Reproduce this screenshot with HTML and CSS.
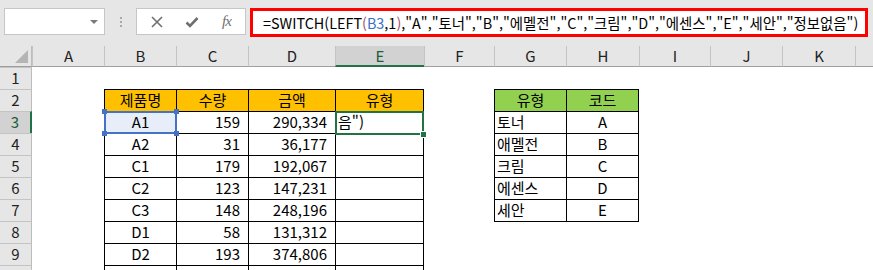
FILE: index.html
```html
<!DOCTYPE html>
<html lang="ko">
<head>
    <meta charset="UTF-8">
    <meta name="viewport" content="width=device-width, initial-scale=1.0">
    <title>SWITCH 함수</title>
    <link rel="stylesheet" href="styles.css">
</head>
<body>
    <!-- formula bar -->
    <div class="toolbar">
        <div class="namebox"><span class="caret"></span></div>
        <div class="grip"><i></i><i></i><i></i></div>
        <div class="fn-buttons">
            <span class="fn-btn">
                <svg width="12" height="12" viewBox="0 0 12 12"><path d="M1 1L11 11M11 1L1 11" stroke="#6f6f6f" stroke-width="1.6" fill="none"/></svg>
            </span>
            <span class="fn-btn">
                <svg width="14" height="12" viewBox="0 0 14 12"><path d="M1.5 6.5L5 10L12.5 2" stroke="#6f6f6f" stroke-width="2.6" fill="none"/></svg>
            </span>
            <span class="fn-btn fx">fx</span>
        </div>
        <div class="formula">=SWITCH(LEFT<span class="paren">(</span><span class="ref">B3</span>,1<span class="paren">)</span>,"A","토너","B","에멜전","C","크림","D","에센스","E","세안","정보없음")</div>
    </div>

    <!-- worksheet -->
    <div class="sheet">
        <div class="corner"></div>
        <div class="ch">A</div><div class="ch">B</div><div class="ch">C</div><div class="ch">D</div>
        <div class="ch on">E</div><div class="ch">F</div><div class="ch">G</div><div class="ch">H</div>
        <div class="ch">I</div><div class="ch">J</div><div class="ch">K</div><div class="ch"></div>

        <div class="rh">1</div>
        <div></div><div></div><div></div><div></div><div></div><div></div><div></div><div></div><div></div><div></div><div></div><div></div>

        <div class="rh">2</div>
        <div></div>
        <div class="t hd-o">제품명</div><div class="t hd-o">수량</div><div class="t hd-o">금액</div><div class="t end hd-o">유형</div>
        <div></div>
        <div class="t hd-g">유형</div><div class="t end hd-g">코드</div>
        <div></div><div></div><div></div><div></div>

        <div class="rh on">3</div>
        <div></div>
        <div class="t ctr sel-ref">A1</div><div class="t num">159</div><div class="t num">290,334</div><div class="t end txt active">음")</div>
        <div></div>
        <div class="t txt">토너</div><div class="t end ctr">A</div>
        <div></div><div></div><div></div><div></div>

        <div class="rh">4</div>
        <div></div>
        <div class="t ctr">A2</div><div class="t num">31</div><div class="t num">36,177</div><div class="t end"></div>
        <div></div>
        <div class="t txt">애멜전</div><div class="t end ctr">B</div>
        <div></div><div></div><div></div><div></div>

        <div class="rh">5</div>
        <div></div>
        <div class="t ctr">C1</div><div class="t num">179</div><div class="t num">192,067</div><div class="t end"></div>
        <div></div>
        <div class="t txt">크림</div><div class="t end ctr">C</div>
        <div></div><div></div><div></div><div></div>

        <div class="rh">6</div>
        <div></div>
        <div class="t ctr">C2</div><div class="t num">123</div><div class="t num">147,231</div><div class="t end"></div>
        <div></div>
        <div class="t txt">에센스</div><div class="t end ctr">D</div>
        <div></div><div></div><div></div><div></div>

        <div class="rh">7</div>
        <div></div>
        <div class="t ctr">C3</div><div class="t num">148</div><div class="t num">248,196</div><div class="t end"></div>
        <div></div>
        <div class="t txt">세안</div><div class="t end ctr">E</div>
        <div></div><div></div><div></div><div></div>

        <div class="rh">8</div>
        <div></div>
        <div class="t ctr">D1</div><div class="t num">58</div><div class="t num">131,312</div><div class="t end"></div>
        <div></div>
        <div class="cap"></div><div class="cap"></div>
        <div></div><div></div><div></div><div></div>

        <div class="rh">9</div>
        <div></div>
        <div class="t ctr">D2</div><div class="t num">193</div><div class="t num">374,806</div><div class="t end"></div>
        <div></div><div></div><div></div><div></div><div></div><div></div><div></div>

        <div class="rh"></div>
        <div></div>
        <div class="t"></div><div class="t"></div><div class="t"></div><div class="t end"></div>
        <div></div><div></div><div></div><div></div><div></div><div></div><div></div>
    </div>
</body>
</html>
```

FILE: styles.css
```css
body {
    margin: 0;
    width: 873px;
    height: 270px;
    overflow: hidden;
    background-color: #e6e6e6;
    font-family: "Noto Sans CJK KR", sans-serif;
    font-size: 15px;
    color: #000;
}

/* formula bar */
.toolbar {
    display: flex;
    align-items: flex-start;
    height: 46px;
    padding-top: 8px;
    box-sizing: border-box;
}
.namebox {
    margin-left: 4px;
    width: 101px;
    height: 27px;
    box-sizing: border-box;
    background-color: #fff;
    border: 1px solid #c6c6c6;
    display: flex;
    align-items: center;
    justify-content: flex-end;
    padding-right: 6px;
}
.caret {
    border-left: 4px solid transparent;
    border-right: 4px solid transparent;
    border-top: 4px solid #7a7a7a;
}
.grip {
    margin-left: 15px;
    margin-top: 9px;
    display: flex;
    flex-direction: column;
    gap: 2px;
}
.grip i {
    width: 2px;
    height: 2px;
    background-color: #a9a9a9;
}
.fn-buttons {
    margin-left: 14px;
    width: 110px;
    height: 27px;
    box-sizing: border-box;
    background-color: #fff;
    border: 1px solid #c6c6c6;
    padding-left: 2px;
    display: grid;
    grid-template-columns: repeat(3, 35px);
    align-items: center;
    justify-items: center;
}
.fn-btn {
    display: flex;
}
.fx {
    font-family: "Liberation Serif", serif;
    font-style: italic;
    font-size: 15px;
    color: #6f6f6f;
    letter-spacing: -1px;
}
.formula {
    margin-left: 4px;
    width: 618px;
    height: 29px;
    box-sizing: border-box;
    background-color: #fff;
    border: 3px solid #ff0000;
    padding-left: 10px;
    font-size: 14.4px;
    line-height: 23px;
    white-space: nowrap;
    overflow: hidden;
}
.formula .paren {
    color: #a0506e;
}
.formula .ref {
    color: #3a6fc4;
}

/* worksheet grid */
.sheet {
    display: grid;
    grid-template-columns: 32px 72px 72px 72px 87px 89px 70px 72px 73px 71px 72px 73px 1fr;
    grid-template-rows: 21px repeat(10, 22px);
    background-color: #fff;
    line-height: 20px;
}
.corner {
    background-color: #e6e6e6;
    border-right: 1px solid #bdbdbd;
    border-bottom: 1px solid #9e9e9e;
    position: relative;
}
.corner::after {
    content: "";
    position: absolute;
    right: 3px;
    bottom: 3px;
    border-left: 13px solid transparent;
    border-bottom: 13px solid #b4b4b4;
}
.ch {
    background-color: #e6e6e6;
    border-left: 1px solid #c4c4c4;
    border-bottom: 1px solid #9e9e9e;
    text-align: center;
    color: #222;
}
.ch.on {
    background-color: #d2d2d2;
    border-bottom: 2px solid #217346;
    color: #1d5c37;
}
.rh {
    background-color: #e6e6e6;
    border-top: 1px solid #c4c4c4;
    border-right: 1px solid #bdbdbd;
    text-align: center;
    color: #222;
}
.rh.on {
    background-color: #d2d2d2;
    border-right: 2px solid #217346;
    color: #1d5c37;
}

/* data tables */
.sheet > div {
    box-sizing: border-box;
    white-space: nowrap;
}
.t {
    border-left: 1px solid #000;
    border-top: 1px solid #000;
}
.t.end {
    border-right: 1px solid #000;
}
.cap {
    border-top: 1px solid #000;
}
.hd-o {
    background-color: #ffc000;
    text-align: center;
}
.hd-g {
    background-color: #92d050;
    text-align: center;
}
.ctr {
    text-align: center;
}
.num {
    text-align: right;
    padding-right: 8px;
}
.txt {
    padding-left: 2px;
}

/* selections */
.sel-ref {
    position: relative;
    background-color: #e7eef9;
}
.sel-ref::before {
    content: "";
    position: absolute;
    inset: -1px;
    border: 2px solid #4472c4;
}
.sel-ref::after {
    content: "";
    position: absolute;
    inset: -3px;
    background:
        linear-gradient(#4472c4, #4472c4) left top / 5px 5px no-repeat,
        linear-gradient(#4472c4, #4472c4) right top / 5px 5px no-repeat,
        linear-gradient(#4472c4, #4472c4) left bottom / 5px 5px no-repeat,
        linear-gradient(#4472c4, #4472c4) right bottom / 5px 5px no-repeat;
}
.active {
    position: relative;
}
.active::before {
    content: "";
    position: absolute;
    inset: -1px -1px -2px -1px;
    border: 2px solid #217346;
}
.active::after {
    content: "";
    position: absolute;
    right: -4px;
    bottom: -5px;
    width: 5px;
    height: 5px;
    background-color: #217346;
    border: 1px solid #fff;
}
```
